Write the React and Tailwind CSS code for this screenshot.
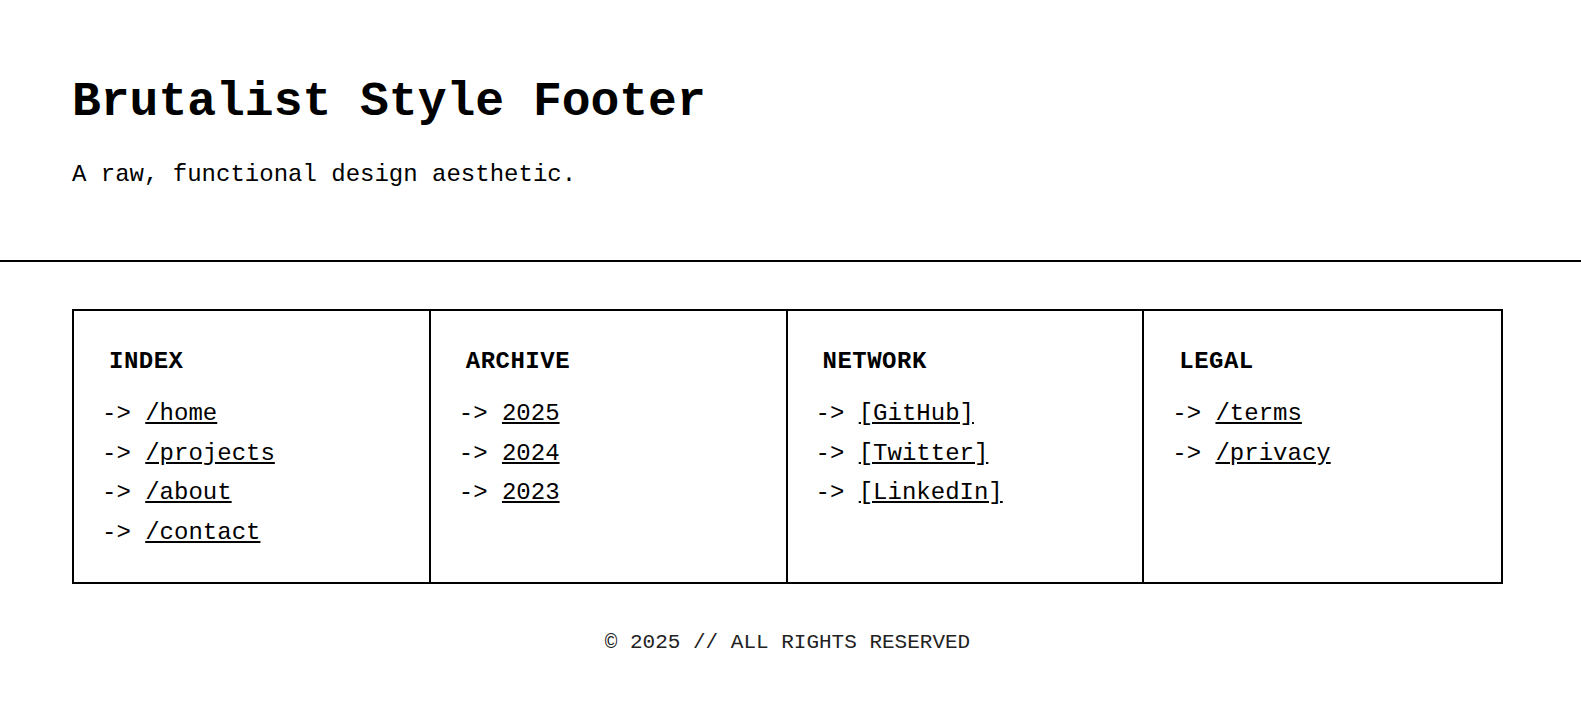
const columns = [
  { title: "INDEX", links: ["/home", "/projects", "/about", "/contact"] },
  { title: "ARCHIVE", links: ["2025", "2024", "2023"] },
  { title: "NETWORK", links: ["[GitHub]", "[Twitter]", "[LinkedIn]"] },
  { title: "LEGAL", links: ["/terms", "/privacy"] },
];

function Column({ title, links, last }) {
  return (
    <div
      className={
        last
          ? "pl-[28px] pr-4 pt-[33px] pb-[30px]"
          : "pl-[28px] pr-4 pt-[33px] pb-[30px] border-r-2 border-black"
      }
    >
      <h3 className="pl-[7px] text-[24px] leading-[36px] font-bold tracking-[0.5px] uppercase">
        {title}
      </h3>
      <ul className="mt-[14px]">
        {links.map((link) => (
          <li key={link} className="text-[24px] leading-[39.5px] whitespace-pre">
            {"-> "}
            <a href="#" className="underline">
              {link}
            </a>
          </li>
        ))}
      </ul>
    </div>
  );
}

export default function App() {
  return (
    <div className="min-h-screen bg-white text-black font-['Liberation_Mono','Courier_New',monospace]">
      <header className="pl-[72px] pt-[74px] pb-[67px] border-b-2 border-black">
        <h1 className="text-[48px] leading-[56px] font-bold">Brutalist Style Footer</h1>
        <p className="mt-[27px] text-[24px] leading-[36px]">A raw, functional design aesthetic.</p>
      </header>
      <footer className="pl-[72px] pr-[78px] pt-[47px]">
        <div className="grid grid-cols-4 border-2 border-black">
          {columns.map((col, i) => (
            <Column
              key={col.title}
              title={col.title}
              links={col.links}
              last={i === columns.length - 1}
            />
          ))}
        </div>
        <p className="mt-[43px] text-center text-[21px] leading-[32px] text-[#222]">
          © 2025 // ALL RIGHTS RESERVED
        </p>
      </footer>
    </div>
  );
}
